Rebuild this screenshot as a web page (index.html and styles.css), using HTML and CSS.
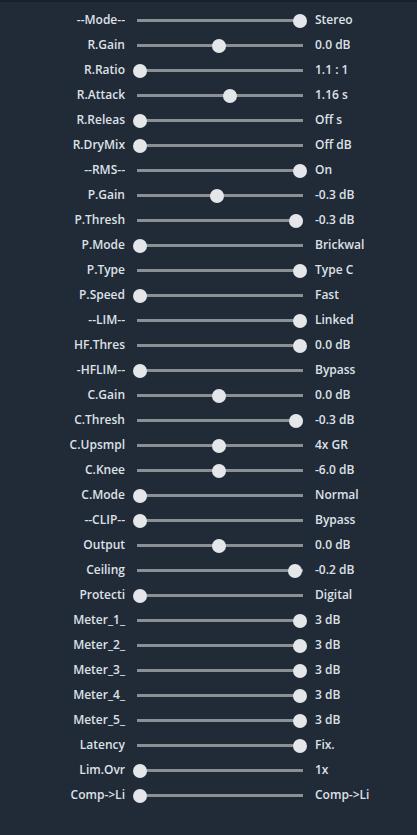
FILE: index.html
```html
<!DOCTYPE html>
<html>
<head>
<meta charset="utf-8">
<link rel="stylesheet" href="styles.css">
</head>
<body>
<div class="panel">
  <div class="row"><span class="lbl">--Mode--</span><input class="sl" type="range" min="0" max="1000" value="1000"><span class="val">Stereo</span></div>
  <div class="row"><span class="lbl">R.Gain</span><input class="sl" type="range" min="0" max="1000" value="495"><span class="val">0.0 dB</span></div>
  <div class="row"><span class="lbl">R.Ratio</span><input class="sl" type="range" min="0" max="1000" value="0"><span class="val">1.1 : 1</span></div>
  <div class="row"><span class="lbl">R.Attack</span><input class="sl" type="range" min="0" max="1000" value="560"><span class="val">1.16 s</span></div>
  <div class="row"><span class="lbl">R.Releas</span><input class="sl" type="range" min="0" max="1000" value="0"><span class="val">Off s</span></div>
  <div class="row"><span class="lbl">R.DryMix</span><input class="sl" type="range" min="0" max="1000" value="0"><span class="val">Off dB</span></div>
  <div class="row"><span class="lbl">--RMS--</span><input class="sl" type="range" min="0" max="1000" value="1000"><span class="val">On</span></div>
  <div class="row"><span class="lbl">P.Gain</span><input class="sl" type="range" min="0" max="1000" value="482"><span class="val">-0.3 dB</span></div>
  <div class="row"><span class="lbl">P.Thresh</span><input class="sl" type="range" min="0" max="1000" value="975"><span class="val">-0.3 dB</span></div>
  <div class="row"><span class="lbl">P.Mode</span><input class="sl" type="range" min="0" max="1000" value="0"><span class="val">Brickwal</span></div>
  <div class="row"><span class="lbl">P.Type</span><input class="sl" type="range" min="0" max="1000" value="1000"><span class="val">Type C</span></div>
  <div class="row"><span class="lbl">P.Speed</span><input class="sl" type="range" min="0" max="1000" value="0"><span class="val">Fast</span></div>
  <div class="row"><span class="lbl">--LIM--</span><input class="sl" type="range" min="0" max="1000" value="1000"><span class="val">Linked</span></div>
  <div class="row"><span class="lbl">HF.Thres</span><input class="sl" type="range" min="0" max="1000" value="1000"><span class="val">0.0 dB</span></div>
  <div class="row"><span class="lbl">-HFLIM--</span><input class="sl" type="range" min="0" max="1000" value="0"><span class="val">Bypass</span></div>
  <div class="row"><span class="lbl">C.Gain</span><input class="sl" type="range" min="0" max="1000" value="495"><span class="val">0.0 dB</span></div>
  <div class="row"><span class="lbl">C.Thresh</span><input class="sl" type="range" min="0" max="1000" value="975"><span class="val">-0.3 dB</span></div>
  <div class="row"><span class="lbl">C.Upsmpl</span><input class="sl" type="range" min="0" max="1000" value="495"><span class="val">4x GR</span></div>
  <div class="row"><span class="lbl">C.Knee</span><input class="sl" type="range" min="0" max="1000" value="495"><span class="val">-6.0 dB</span></div>
  <div class="row"><span class="lbl">C.Mode</span><input class="sl" type="range" min="0" max="1000" value="0"><span class="val">Normal</span></div>
  <div class="row"><span class="lbl">--CLIP--</span><input class="sl" type="range" min="0" max="1000" value="0"><span class="val">Bypass</span></div>
  <div class="row"><span class="lbl">Output</span><input class="sl" type="range" min="0" max="1000" value="495"><span class="val">0.0 dB</span></div>
  <div class="row"><span class="lbl">Ceiling</span><input class="sl" type="range" min="0" max="1000" value="968"><span class="val">-0.2 dB</span></div>
  <div class="row"><span class="lbl">Protecti</span><input class="sl" type="range" min="0" max="1000" value="0"><span class="val">Digital</span></div>
  <div class="row"><span class="lbl">Meter_1_</span><input class="sl" type="range" min="0" max="1000" value="1000"><span class="val">3 dB</span></div>
  <div class="row"><span class="lbl">Meter_2_</span><input class="sl" type="range" min="0" max="1000" value="1000"><span class="val">3 dB</span></div>
  <div class="row"><span class="lbl">Meter_3_</span><input class="sl" type="range" min="0" max="1000" value="1000"><span class="val">3 dB</span></div>
  <div class="row"><span class="lbl">Meter_4_</span><input class="sl" type="range" min="0" max="1000" value="1000"><span class="val">3 dB</span></div>
  <div class="row"><span class="lbl">Meter_5_</span><input class="sl" type="range" min="0" max="1000" value="1000"><span class="val">3 dB</span></div>
  <div class="row"><span class="lbl">Latency</span><input class="sl" type="range" min="0" max="1000" value="1000"><span class="val">Fix.</span></div>
  <div class="row"><span class="lbl">Lim.Ovr</span><input class="sl" type="range" min="0" max="1000" value="0"><span class="val">1x</span></div>
  <div class="row"><span class="lbl">Comp-&gt;Li</span><input class="sl" type="range" min="0" max="1000" value="0"><span class="val">Comp-&gt;Li</span></div>
</div>
</body>
</html>
```

FILE: styles.css
```css
html, body {
  margin: 0;
  padding: 0;
  background: #212a37;
}
body {
  width: 417px;
  height: 835px;
  overflow: hidden;
  border-top: 2px solid #1a2029;
  box-sizing: border-box;
  font-family: "Open Sans", "Noto Sans", sans-serif;
  font-size: 12px;
  font-weight: 600;
  color: #dde1e7;
}
.panel {
  display: flex;
  flex-direction: column;
  padding-top: 6px;
}
.row {
  display: grid;
  grid-template-columns: 125px 174px auto;
  column-gap: 8px;
  align-items: center;
  height: 25px;
}
.lbl {
  text-align: right;
  white-space: nowrap;
  line-height: 16px;
  margin-top: -2px;
}
.val {
  white-space: nowrap;
  line-height: 16px;
  margin-top: -2px;
}
.sl {
  -webkit-appearance: none;
  appearance: none;
  width: 174px;
  height: 14px;
  margin: 0;
  padding: 0;
  background: transparent;
  outline: none;
}
.sl::-webkit-slider-runnable-track {
  height: 3px;
  background: linear-gradient(#8b9097, #8b9097) 4px 0 / calc(100% - 8px) 100% no-repeat;
  border: none;
}
.sl::-webkit-slider-thumb {
  -webkit-appearance: none;
  appearance: none;
  width: 14px;
  height: 14px;
  border-radius: 50%;
  background: #e4e6ea;
  border: none;
  margin-top: -5.5px;
}
```
